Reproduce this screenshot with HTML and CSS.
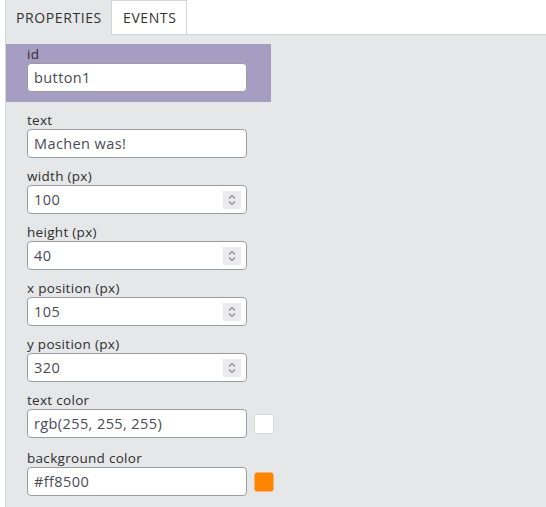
FILE: index.html
```html
<!DOCTYPE html>
<html>
<head>
<meta charset="utf-8">
<link rel="stylesheet" href="styles.css">
</head>
<body>
<div class="panel">
  <div class="tabs">
    <div class="tab active">PROPERTIES</div>
    <div class="tab">EVENTS</div>
    <div class="tab-fill"></div>
  </div>
  <div class="content">
    <div class="group selected">
      <label class="label">id</label>
      <div class="field"><input class="value" type="text" value="button1"></div>
    </div>
    <div class="group">
      <label class="label">text</label>
      <div class="field"><input class="value" type="text" value="Machen was!"></div>
    </div>
    <div class="group">
      <label class="label">width (px)</label>
      <div class="field"><input class="value" type="text" value="100"><span class="spin"><svg width="18" height="18" viewBox="0 0 18 18"><path d="M6 7.5 L9 4.5 L12 7.5 M6 10.5 L9 13.5 L12 10.5" fill="none" stroke="#8a8a92" stroke-width="1.1"/></svg></span></div>
    </div>
    <div class="group">
      <label class="label">height (px)</label>
      <div class="field"><input class="value" type="text" value="40"><span class="spin"><svg width="18" height="18" viewBox="0 0 18 18"><path d="M6 7.5 L9 4.5 L12 7.5 M6 10.5 L9 13.5 L12 10.5" fill="none" stroke="#8a8a92" stroke-width="1.1"/></svg></span></div>
    </div>
    <div class="group">
      <label class="label">x position (px)</label>
      <div class="field"><input class="value" type="text" value="105"><span class="spin"><svg width="18" height="18" viewBox="0 0 18 18"><path d="M6 7.5 L9 4.5 L12 7.5 M6 10.5 L9 13.5 L12 10.5" fill="none" stroke="#8a8a92" stroke-width="1.1"/></svg></span></div>
    </div>
    <div class="group">
      <label class="label">y position (px)</label>
      <div class="field"><input class="value" type="text" value="320"><span class="spin"><svg width="18" height="18" viewBox="0 0 18 18"><path d="M6 7.5 L9 4.5 L12 7.5 M6 10.5 L9 13.5 L12 10.5" fill="none" stroke="#8a8a92" stroke-width="1.1"/></svg></span></div>
    </div>
    <div class="group color">
      <label class="label">text color</label>
      <div class="row">
        <div class="field"><input class="value" type="text" value="rgb(255, 255, 255)"></div>
        <span class="swatch white"></span>
      </div>
    </div>
    <div class="group color">
      <label class="label">background color</label>
      <div class="row">
        <div class="field"><input class="value" type="text" value="#ff8500"></div>
        <span class="swatch orange"></span>
      </div>
    </div>
  </div>
</div>
</body>
</html>
```

FILE: styles.css
```css
* { box-sizing: border-box; }
html, body {
  margin: 0;
  padding: 0;
  background: #ffffff;
  height: 100%;
}
body {
  padding-left: 5px;
  font-family: "Open Sans", "Lato", sans-serif;
  color: #333;
}
.panel {
  height: 100%;
  display: flex;
  flex-direction: column;
  background: #e6e7e9;
  border-left: 1px solid #d3d4d6;
}
.tabs {
  display: flex;
  height: 35px;
  flex: none;
}
.tab {
  height: 35px;
  padding: 0 10px 0 11px;
  display: flex;
  align-items: center;
  font-size: 14px;
  letter-spacing: 0.6px;
  color: #333;
  background: #fff;
  border-top: 1px solid #d3d4d6;
  border-left: 1px solid #d3d4d6;
  border-right: 1px solid #d3d4d6;
  border-bottom: 1px solid #d3d4d6;
}
.tab.active {
  background: #e6e7e9;
  border: none;
  width: 105px;
  padding-left: 10px;
  white-space: nowrap;
}
.tab-fill {
  flex: 1;
  background: #fff;
  border-bottom: 1px solid #d3d4d6;
}
.content {
  flex: 1;
  padding-top: 9px;
}
.group {
  width: 265px;
  padding: 0 0 0 21px;
  margin-bottom: 11px;
}
.group.selected {
  background: #a59dc2;
  padding-top: 3px;
  padding-bottom: 10px;
}
.label {
  display: block;
  font-size: 13.5px;
  letter-spacing: 0.3px;
  line-height: 15px;
  margin-bottom: 1px;
  color: #2e2e2e;
}
.field {
  width: 220px;
  height: 29px;
  background: #fff;
  border: 1px solid #9c9da1;
  border-radius: 4px;
  display: flex;
  align-items: center;
  padding: 0 5px 0 6px;
}
.value {
  flex: 1;
  min-width: 0;
  border: none;
  outline: none;
  background: transparent;
  font-family: "Open Sans", "Lato", sans-serif;
  font-size: 14.5px;
  letter-spacing: 0.4px;
  color: #4a4c55;
  padding: 0;
}
.spin {
  width: 18px;
  height: 18px;
  background: #ebebef;
  display: flex;
  flex: none;
}
.row {
  display: flex;
  align-items: center;
  gap: 7px;
  width: 260px;
  height: 29px;
}
.group.color { margin-bottom: 13px; }
.swatch {
  width: 20px;
  height: 20px;
  border-radius: 3px;
  flex: none;
}
.swatch.white {
  background: #fff;
  border: 1px solid #dcdcdc;
}
.swatch.orange {
  background: #ff8500;
  border: 1px solid #f5b27a;
}
```
